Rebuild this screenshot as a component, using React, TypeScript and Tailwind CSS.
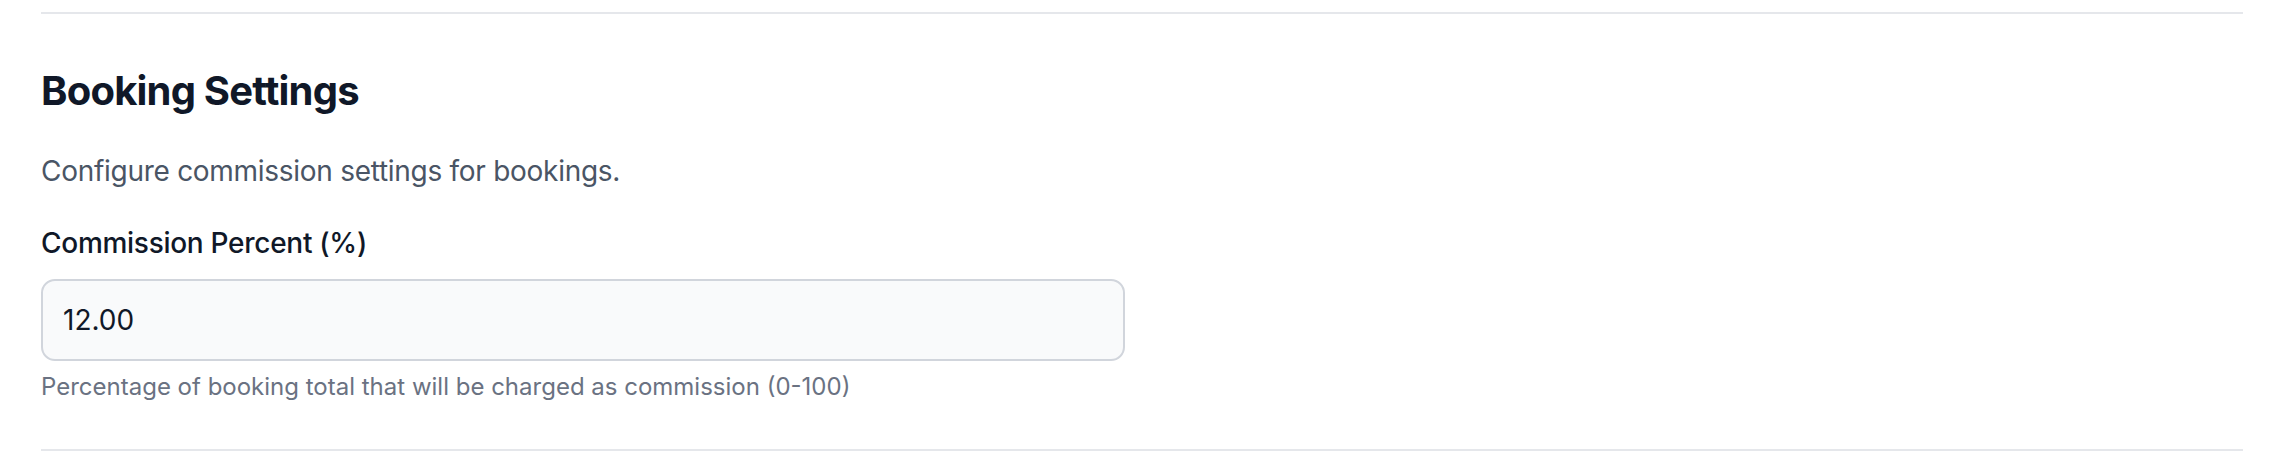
export default function App() {
  return (
    <div className="min-h-screen bg-white px-[41px] pt-[12px]" style={{ fontFamily: 'Inter, "Noto Sans", sans-serif' }}>
      <div className="border-t-2 border-gray-200" />
      <section className="pt-[49px] pb-[45px]">
        <h2 className="text-[40px] leading-[56px] font-bold tracking-[-0.02em] text-gray-900">Booking Settings</h2>
        <p className="mt-[31px] text-[28px] leading-[42px] tracking-[-0.01em] text-gray-600">
          Configure commission settings for bookings.
        </p>
        <div className="mt-[30px]">
          <label htmlFor="commission" className="block text-[28px] leading-[42px] font-medium tracking-[-0.01em] text-gray-900">
            Commission Percent (%)
          </label>
          <input
            id="commission"
            type="text"
            defaultValue="12.00"
            className="mt-[15px] block h-[82px] w-[1084px] rounded-[14px] border-2 border-gray-300 bg-gray-50 px-[20px] text-[28px] text-gray-900 outline-none"
          />
          <p className="mt-[8px] text-[24px] leading-[35px] text-gray-500">
            Percentage of booking total that will be charged as commission (0-100)
          </p>
        </div>
      </section>
      <div className="border-t-2 border-gray-200" />
    </div>
  );
}
